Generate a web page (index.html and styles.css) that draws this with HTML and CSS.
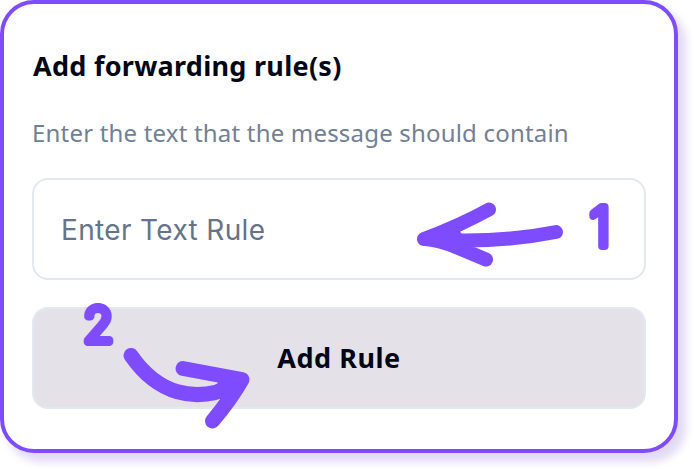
FILE: index.html
```html
<!DOCTYPE html>
<html lang="en">
<head>
<meta charset="utf-8">
<title>Add forwarding rule(s)</title>
<link rel="stylesheet" href="styles.css">
</head>
<body>
<main class="card">
  <h1 class="title">Add forwarding rule(s)</h1>
  <p class="hint">Enter the text that the message should contain</p>
  <div class="field">Enter Text Rule</div>
  <button class="submit" type="button">Add Rule</button>
  <svg class="marks" viewBox="0 0 678 453" aria-hidden="true">
    <path class="fill" d="M424 239 L475 216 L490 215 Q468 228 460 231.500 L470 246 L482 252 L480 257 Q450 245 424 239Z"/>
    <path class="stroke" d="M489 209.500 Q461 225 424 239 Q439 240 456 247 L486 259.500 M424 239 Q496 244 556 232"/>
    <path class="fill" d="M242.500 379 L210 374 L218 383 L208 389 L220 399 L225 404Z"/>
    <path class="stroke curve" d="M131 355.500 C157 393 194 405 236 385 M183 368.500 L242 379.500 Q231 399 212.500 421"/>
    <text class="digit" x="590" y="246">1</text>
    <text class="digit digit-two" x="83.500" y="342">2</text>
  </svg>
</main>
</body>
</html>
```
FILE: styles.css
```css
* { box-sizing: border-box; }
body { margin: 0; height: 469px; background: #fff; overflow: hidden; }
.card {
  position: relative;
  width: 678px;
  height: 453px;
  padding: 42px 28px 0;
  border: 4px solid #7f4bff;
  border-radius: 34px;
  background: #fff;
  box-shadow: 7px 8px 9px 1px #e2daf5;
  display: flex;
  flex-direction: column;
  font-family: "Noto Sans", sans-serif;
}
.title {
  margin: 0 0 0 1px;
  font-size: 27px;
  line-height: 40px;
  font-weight: 700;
  letter-spacing: 0.28px;
  color: #020617;
  white-space: nowrap;
}
.hint {
  margin: 29px 0 0;
  font-size: 24px;
  line-height: 36px;
  letter-spacing: 0.19px;
  color: #718096;
  white-space: nowrap;
}
.field, .submit {
  width: 614px;
  height: 102px;
  flex: none;
  border: 2px solid #e2e8f0;
  border-radius: 16px;
}
.field {
  margin-top: 27px;
  padding: 1px 27px 0;
  font: 28px/98px Inter, sans-serif;
  letter-spacing: 0.35px;
  color: #64748b;
}
.submit {
  margin-top: 27px;
  padding: 0;
  background: #e4e1e8;
  color: #020617;
  font: 700 27px/98px "Noto Sans", sans-serif;
  letter-spacing: 0.5px;
}
.marks {
  position: absolute;
  left: -4px;
  top: -4px;
  width: 678px;
  height: 453px;
}
.fill { fill: #7f4bff; }
.stroke {
  fill: none;
  stroke: #7f4bff;
  stroke-width: 14px;
  stroke-linecap: round;
  stroke-linejoin: round;
}
.curve { stroke-width: 15px; }
.digit {
  font: 200 53px Inter, sans-serif;
  fill: #7f4bff;
  stroke: #7f4bff;
  stroke-width: 8px;
  stroke-linejoin: round;
}
.digit-two { font-size: 48px; }
```
